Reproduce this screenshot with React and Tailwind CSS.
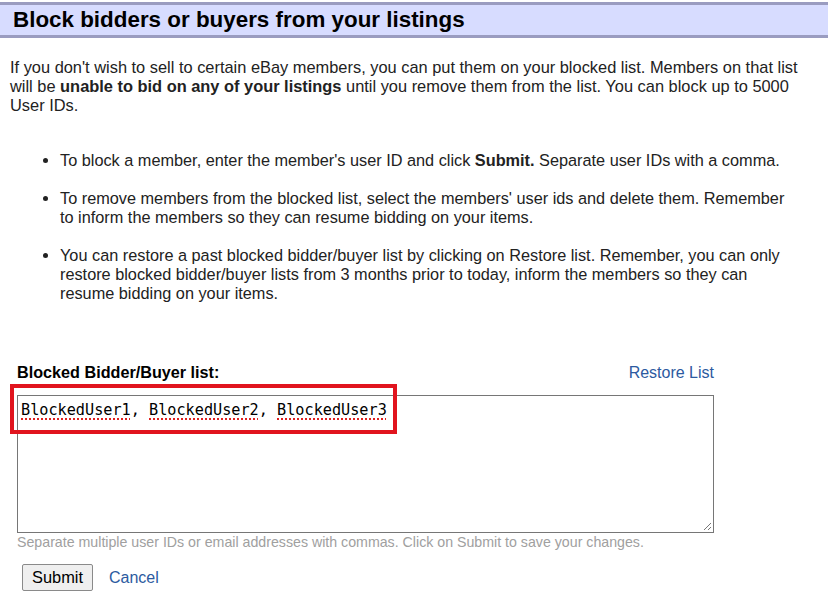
import React from 'react'

const users = ['BlockedUser1', 'BlockedUser2', 'BlockedUser3']

const App = () => {
  return (
    <div className="min-h-screen bg-white text-[#222] font-['Liberation_Sans',Arial,sans-serif]">
      {/* Title bar */}
      <div className="mt-[2px] h-[36px] border-t-[3px] border-b-[3px] border-[#9a9cc0] bg-[#d7dcff] pl-[13px] flex items-center">
        <h1 className="text-[22.4px] font-bold text-black leading-none">Block bidders or buyers from your listings</h1>
      </div>

      {/* Intro */}
      <p className="ml-[10px] mt-[20px] w-[805px] text-[16.4px] leading-[19px]">
        If you don't wish to sell to certain eBay members, you can put them on your blocked list. Members on that list will be{' '}
        <b>unable to bid on any of your listings</b> until you remove them from the list. You can block up to 5000 User IDs.
      </p>

      {/* Tips */}
      <ul className="ml-[60px] mt-[36px] w-[735px] list-disc text-[16.3px] leading-[19px] space-y-[19px]">
        <li>
          To block a member, enter the member's user ID and click <b>Submit.</b> Separate user IDs with a comma.
        </li>
        <li>
          To remove members from the blocked list, select the members' user ids and delete them. Remember to inform the members so they can resume bidding on your items.
        </li>
        <li>
          You can restore a past blocked bidder/buyer list by clicking on Restore list. Remember, you can only restore blocked bidder/buyer lists from 3 months prior to today, inform the members so they can resume bidding on your items.
        </li>
      </ul>

      {/* Form */}
      <div className="ml-[17px] mt-[60px] w-[697px]">
        <div className="flex items-center justify-between h-[19px]">
          <label className="text-[16.2px] font-bold text-black">Blocked Bidder/Buyer list:</label>
          <a className="text-[16px] text-[#2c5aa0] cursor-pointer">Restore List</a>
        </div>

        <div className="relative mt-[13px]">
          <div className="h-[138px] border border-[#767676] bg-white px-[3px] pt-[5px] font-['DejaVu_Sans_Mono',monospace] text-[15.2px] leading-[19px] text-black">
            {users.map((u, i) => (
              <span key={u}>
                <span className="underline decoration-dotted decoration-[#e02020] decoration-2 underline-offset-[3px]">{u}</span>
                {i < users.length - 1 ? ', ' : ''}
              </span>
            ))}
          </div>
          <svg className="absolute right-[2px] bottom-[2px]" width="9" height="9" viewBox="0 0 9 9">
            <path d="M8 1 L1 8 M8 5 L5 8" stroke="#777" strokeWidth="1" />
          </svg>
          {/* highlight box */}
          <div className="absolute left-[-7px] top-[-11px] w-[387px] h-[50px] border-[4px] border-[#e1141e]" />
        </div>

        <p className="mt-[1px] text-[14.2px] leading-[17px] text-[#a0a0a0]">
          Separate multiple user IDs or email addresses with commas. Click on Submit to save your changes.
        </p>

        <div className="mt-[13px] ml-[5px] flex items-center gap-[16px]">
          <button className="h-[27px] w-[71px] border border-[#8a8a8a] bg-[#efefef] text-[16.4px] text-black rounded-[2px]">
            Submit
          </button>
          <a className="text-[16px] text-[#2c5aa0] cursor-pointer">Cancel</a>
        </div>
      </div>
    </div>
  )
}

export default App
